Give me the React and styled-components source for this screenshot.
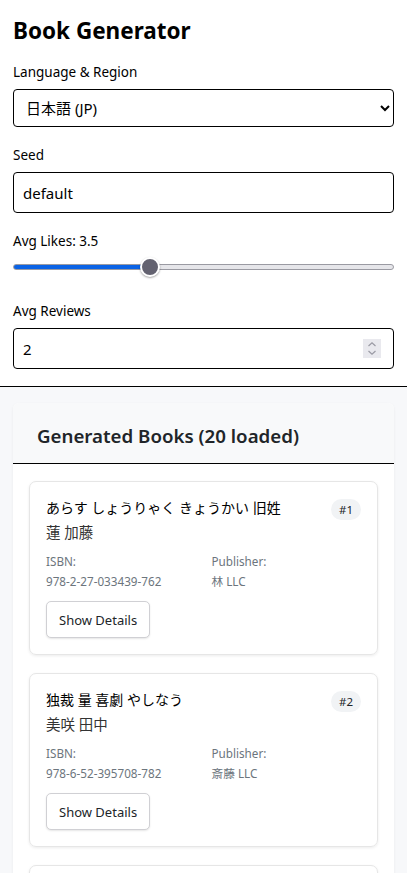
import React, { useState } from "react";
import styled, { createGlobalStyle } from "styled-components";

const GlobalStyle = createGlobalStyle`
  html, body {
    margin: 0;
    padding: 0;
    background: #f7f8fa;
    font-family: "Noto Sans", "Noto Sans CJK JP", sans-serif;
    color: #000;
  }
  * { box-sizing: border-box; }
`;

const Controls = styled.div`
  background: #fff;
  padding: 17px 13px 17px;
  border-bottom: 1px solid #000;
`;

const Title = styled.h1`
  font-size: 22.5px;
  font-weight: 700;
  margin: 0 0 19px;
  line-height: 1.2;
`;

const Field = styled.div`
  display: flex;
  flex-direction: column;
  margin-bottom: ${(p) => p.$gap ?? 19}px;
`;

const Label = styled.label`
  font-size: 13.5px;
  line-height: 18px;
  margin-bottom: ${(p) => p.$gap ?? 8}px;
`;

const Select = styled.select`
  height: 38px;
  padding: 0 8px;
  font-size: 15px;
  font-family: inherit;
  border: 1px solid #000;
  border-radius: 4px;
  background: #fff;
  color: #000;
`;

const TextInput = styled.input`
  height: 41px;
  padding: 0 9px;
  font-size: 15px;
  font-family: inherit;
  border: 1px solid #000;
  border-radius: 4px;
  background: #fff;
  color: #000;
`;

const Range = styled.input`
  -webkit-appearance: none;
  appearance: none;
  width: 100%;
  height: 20px;
  margin: 0;
  background: transparent;

  &::-webkit-slider-runnable-track {
    height: 6px;
    border-radius: 3px;
    background: linear-gradient(
      to right,
      #0b63e5 0%,
      #0b63e5 ${(p) => p.$pct}%,
      #e6e6ea ${(p) => p.$pct}%,
      #e6e6ea 100%
    );
    border: 1px solid #9a9aa2;
  }

  &::-webkit-slider-thumb {
    -webkit-appearance: none;
    width: 20px;
    height: 20px;
    margin-top: -8px;
    border-radius: 50%;
    background: #636270;
    border: 2px solid #fff;
    box-shadow: 0 1px 2px rgba(0, 0, 0, 0.35);
  }
`;

const NumberWrap = styled.div`
  position: relative;
  display: flex;
`;

const NumberInput = styled(TextInput)`
  flex: 1;
  &::-webkit-inner-spin-button,
  &::-webkit-outer-spin-button {
    -webkit-appearance: none;
    margin: 0;
  }
`;

const Spinner = styled.span`
  position: absolute;
  right: 13px;
  top: 11px;
  width: 18px;
  height: 19px;
  background: #e9e9ee;
  display: flex;
  align-items: center;
  justify-content: center;
`;

const Page = styled.div`
  padding: 16px 13px;
`;

const Panel = styled.div`
  background: #fff;
  border-radius: 6px;
  box-shadow: 0 1px 3px rgba(0, 0, 0, 0.06);
`;

const PanelHeader = styled.div`
  background: #f8f9fa;
  padding: 21px 24px 16px;
  border-bottom: 1px solid #000;
  border-radius: 6px 6px 0 0;
`;

const PanelTitle = styled.h2`
  margin: 0;
  font-size: 18.7px;
  font-weight: 600;
  line-height: 23px;
  color: #212529;
`;

const PanelBody = styled.div`
  padding: 17px 16px;
  display: flex;
  flex-direction: column;
  gap: 18px;
`;

const BookCard = styled.div`
  border: 1px solid #e6e6e6;
  border-radius: 7px;
  box-shadow: 0 1px 3px rgba(0, 0, 0, 0.08);
  padding: 16px 16px 16px;
  display: flex;
  flex-direction: column;
`;

const CardTop = styled.div`
  display: flex;
  justify-content: space-between;
  align-items: flex-start;
`;

const BookTitle = styled.div`
  font-size: 14px;
  line-height: 20px;
  color: #000;
`;

const Author = styled.div`
  font-size: 14.5px;
  line-height: 20px;
  color: #333;
  margin-top: 4px;
`;

const Badge = styled.span`
  background: #f1f3f5;
  border-radius: 12px;
  padding: 2px 8px;
  font-size: 11.5px;
  line-height: 17px;
  color: #212529;
  margin-top: 1px;
`;

const Meta = styled.div`
  display: grid;
  grid-template-columns: 1fr 1fr;
  column-gap: 16px;
  margin-top: 11px;
`;

const MetaItem = styled.div`
  display: flex;
  flex-direction: column;
  gap: 4px;
  font-size: 11.7px;
  line-height: 16px;
  color: #6c757d;
`;

const DetailsButton = styled.button`
  align-self: flex-start;
  margin-top: 12px;
  height: 37px;
  padding: 0 12px;
  font-family: inherit;
  font-size: 13px;
  color: #212529;
  background: #fff;
  border: 1px solid #d0d0d4;
  border-radius: 5px;
  box-shadow: 0 1px 2px rgba(0, 0, 0, 0.1);
`;

const books = [
  {
    id: 1,
    title: "あらす しょうりゃく きょうかい 旧姓",
    author: "蓮 加藤",
    isbn: "978-2-27-033439-762",
    publisher: "林 LLC",
  },
  {
    id: 2,
    title: "独裁 量 喜劇 やしなう",
    author: "美咲 田中",
    isbn: "978-6-52-395708-782",
    publisher: "斎藤 LLC",
  },
  {
    id: 3,
    title: "かいさつ 旅行 しんせい",
    author: "陽翔 佐藤",
    isbn: "978-4-11-204578-331",
    publisher: "山本 LLC",
  },
];

export default function App() {
  const [seed, setSeed] = useState("default");
  const [likes, setLikes] = useState(3.5);
  const [reviews, setReviews] = useState(2);

  return (
    <>
      <GlobalStyle />
      <Controls>
        <Title>Book Generator</Title>
        <Field>
          <Label>Language &amp; Region</Label>
          <Select defaultValue="ja">
            <option value="en">English (US)</option>
            <option value="ja">日本語 (JP)</option>
          </Select>
        </Field>
        <Field $gap={19}>
          <Label>Seed</Label>
          <TextInput value={seed} onChange={(e) => setSeed(e.target.value)} />
        </Field>
        <Field $gap={25}>
          <Label $gap={7}>Avg Likes: {likes}</Label>
          <Range
            type="range"
            min="0"
            max="10"
            step="0.1"
            value={likes}
            $pct={(likes / 10) * 100}
            onChange={(e) => setLikes(Number(e.target.value))}
          />
        </Field>
        <Field $gap={0}>
          <Label>Avg Reviews</Label>
          <NumberWrap>
            <NumberInput
              type="number"
              value={reviews}
              onChange={(e) => setReviews(e.target.value)}
            />
            <Spinner>
              <svg width="10" height="15" viewBox="0 0 10 15" fill="none" stroke="#9a9aa4" strokeWidth="1.2">
                <path d="M1.5 5 L5 1.8 L8.5 5" />
                <path d="M1.5 10 L5 13.2 L8.5 10" />
              </svg>
            </Spinner>
          </NumberWrap>
        </Field>
      </Controls>

      <Page>
        <Panel>
          <PanelHeader>
            <PanelTitle>Generated Books (20 loaded)</PanelTitle>
          </PanelHeader>
          <PanelBody>
            {books.map((b) => (
              <BookCard key={b.id}>
                <CardTop>
                  <div>
                    <BookTitle>{b.title}</BookTitle>
                    <Author>{b.author}</Author>
                  </div>
                  <Badge>#{b.id}</Badge>
                </CardTop>
                <Meta>
                  <MetaItem>
                    <span>ISBN:</span>
                    <span>{b.isbn}</span>
                  </MetaItem>
                  <MetaItem>
                    <span>Publisher:</span>
                    <span>{b.publisher}</span>
                  </MetaItem>
                </Meta>
                <DetailsButton>Show Details</DetailsButton>
              </BookCard>
            ))}
          </PanelBody>
        </Panel>
      </Page>
    </>
  );
}
